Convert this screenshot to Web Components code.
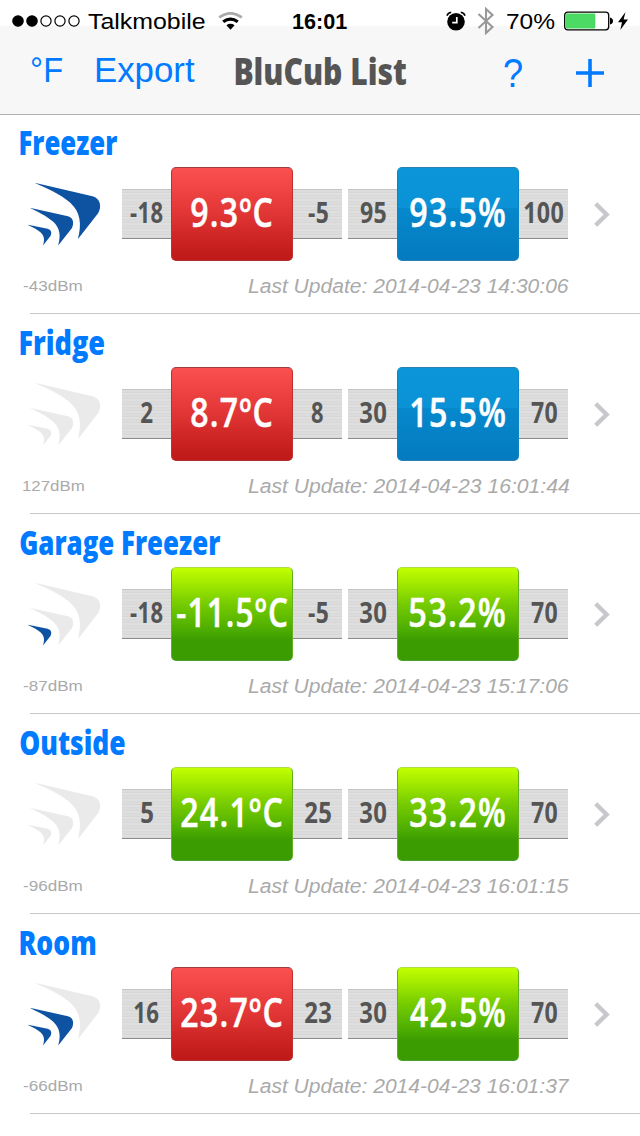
<!DOCTYPE html>
<html lang="en">
<head>
<meta charset="utf-8">
<title>BluCub List</title>
<style>
html,body{margin:0;background:#fff}
body{width:640px;height:1136px;overflow:hidden;font-family:"Liberation Sans",Arial,sans-serif}
</style>
</head>
<body>
<blucub-app></blucub-app>
<script>
const define = (name, html, init) => {
  const t = document.createElement('template');
  t.innerHTML = html;
  customElements.define(name, class extends HTMLElement {
    connectedCallback() {
      if (this.shadowRoot) return;
      this.attachShadow({mode: 'open'}).appendChild(t.content.cloneNode(true));
      if (init) init.call(this, this.shadowRoot);
    }
  });
};

/* A text label whose box is its ink width (w) by its cap height (cap). */
const ctx = document.createElement('canvas').getContext('2d');
customElements.define('fit-text', class extends HTMLElement {
  connectedCallback() {
    if (this.shadowRoot) return;
    const w = +this.getAttribute('w'), cap = +this.getAttribute('cap');
    const root = this.attachShadow({mode: 'open'});
    root.innerHTML = `<style>:host{display:block;flex:none;width:${w}px;height:${cap}px}
      span{display:inline-block;white-space:pre;line-height:${cap}px;transform-origin:0 0;vertical-align:top}</style><span><slot></slot></span>`;
    const s = getComputedStyle(this);
    ctx.font = `${s.fontStyle} ${s.fontWeight} ${s.fontSize} ${s.fontFamily}`;
    ctx.letterSpacing = s.letterSpacing === 'normal' ? '0px' : s.letterSpacing;
    const m = ctx.measureText(this.textContent);
    const k = w / (m.actualBoundingBoxRight + m.actualBoundingBoxLeft);
    const dy = cap / 2 - (m.fontBoundingBoxAscent - m.fontBoundingBoxDescent) / 2;
    root.querySelector('span').style.transform = `translate(${m.actualBoundingBoxLeft * k}px,${dy}px) scaleX(${k})`;
  }
});

define('status-bar', `<style>
:host{display:flex;height:41px;align-items:center;color:#000;font-size:22.5px}
svg{display:block;flex:none}
.dots{margin-left:12px}.carrier{margin-left:8px}.wifi{margin-left:13px}
.time{margin-left:50px;font-weight:bold;font-size:22px}
.alarm{margin-left:99px}.bt{margin-left:11px}.pct{margin-left:12px}.bat{margin-left:9px}
</style>
<svg class="dots" width="68" height="12"><g stroke="#000" stroke-width="1.2"><circle cx="6" cy="6" r="5.2"/><circle cx="20" cy="6" r="5.2"/><g fill="none"><circle cx="34" cy="6" r="5.1"/><circle cx="48" cy="6" r="5.1"/><circle cx="62" cy="6" r="5.1"/></g></g></svg>
<fit-text class="carrier" w="117" cap="16">Talkmobile</fit-text>
<svg class="wifi" width="25" height="18" viewBox="0 0 25 18"><path d="M1.2 5.4Q12.5-2.8 23.8 5.4" fill="none" stroke="#aaa" stroke-width="2.8"/><path d="M5.2 9.8Q12.5 4.4 19.8 9.8" fill="none" stroke="#000" stroke-width="3.2"/><path d="M8.4 13.2Q12.5 10.4 16.6 13.2L12.5 17.8Z"/></svg>
<fit-text class="time" w="54" cap="16">16:01</fit-text>
<svg class="alarm" width="20" height="20" viewBox="0 0 20 20"><circle cx="10" cy="10.8" r="8.8"/><path d="M.9 4.6Q2 1.6 5.2 1.2M14.8 1.2Q18 1.6 19.1 4.6" fill="none" stroke="#000" stroke-width="1.6"/><path d="M10.8 6V11.6H6.2" fill="none" stroke="#fff" stroke-width="1.7"/></svg>
<svg class="bt" width="18" height="28" viewBox="0 0 18 28"><path d="M1.5 7L15.5 20L9 26V2L15.5 8L1.5 21" fill="none" stroke="#999" stroke-width="2.1"/></svg>
<fit-text class="pct" w="48" cap="16">70%</fit-text>
<svg class="bat" width="66" height="20" viewBox="0 0 66 20"><rect x=".7" y="1.2" width="44" height="17.6" rx="3" fill="#fff" stroke="#000" stroke-width="1.3"/><rect x="2" y="2.6" width="29.3" height="14.8" rx="1" fill="#4cd964"/><path d="M46 6.5Q49 7.5 49 10T46 13.5Z"/><path d="M61.5 1L54 11.2H58L56.3 19L64 8.6H59.6Z"/></svg>`);

define('nav-bar', `<style>
:host{display:flex;align-items:flex-start;color:#007aff;font-size:34.5px;height:73px}
.f{margin:17px 0 0 31.5px}.e{margin:17px 0 0 34px}
.t{margin:17px 0 0 40px;color:#555;font:800 37px "Open Sans",sans-serif}
.q{margin:18px 0 0 98px;font-size:41px}
svg{margin:18px 0 0 54px;display:block}
</style>
<fit-text class="f" w="30" cap="24">°F</fit-text>
<fit-text class="e" w="99" cap="24">Export</fit-text>
<fit-text class="t" w="171" cap="27">BluCub List</fit-text>
<fit-text class="q" w="18.5" cap="28">?</fit-text>
<svg width="28" height="28"><path d="M0 14H28M14 0V28" stroke="#007aff" stroke-width="3.6"/></svg>`);

define('signal-logo', `<style>:host{display:block;width:74px;height:66px}svg{display:block}path{fill:#eaeaea}
:host([level="1"]) .a,:host([level="2"]) .a,:host([level="2"]) .b,:host([level="3"]) path{fill:#0e53a2}</style>
<svg width="74" height="66" viewBox="28 181 74 66">
<path class="c" d="M34.6 182.8L92.5 196.3C100.5 198.5 101.8 206.5 98.3 213L77.8 239.3C82 224 80.5 212 70 202.5C60 194 47 188.6 34.6 182.8Z"/>
<path class="b" d="M29.6 207.8L68 216.3C73.4 217.8 74.2 223 72 228L58.2 245.4C60.8 236 60.3 228.5 53 221.6C46 215.5 37.6 212 29.6 207.8Z"/>
<path class="a" d="M27.8 224.8L47.5 228.8C51.3 229.8 52 232.5 50.5 236L43 245.4C44.6 240 44.5 236.3 41 232.7C37.4 229.3 32.6 227.3 27.8 224.8Z"/></svg>`);

define('range-meter', `<style>
:host{display:flex;width:220px;height:94px;align-items:center}
.side{width:49px;height:46px;padding-bottom:2px;border-top:1px solid #c4c4c4;border-bottom:1px solid #8c8c8c;display:flex;align-items:center;justify-content:center;background:repeating-linear-gradient(#dcdcdc 0 2px,#d7d7d7 2px 3px,#dfdfdf 3px 5px,#d9d9d9 5px 6px);color:#555;font:700 28px "Open Sans",sans-serif;letter-spacing:.5px}
.val{width:121.5px;margin-right:.5px;height:94px;padding-bottom:3px;box-sizing:border-box;border-radius:5px;display:flex;align-items:center;justify-content:center;color:#fff;font:600 39.5px "Open Sans",sans-serif;letter-spacing:1.5px;-webkit-text-stroke:.5px #fff}
.red{background:linear-gradient(#fb5050,#e63a3a 42%,#c21c1a 92%,#c01a18);border:1px solid #a04444;border-color:#984040 #c03030 #a83030}
.blue{background:linear-gradient(#0b96d9,#0b92d6 43%,#0688cc 44%,#047bc0);border:1px solid #2c84b4;border-color:#2a82b0 #0a86c8 #2a80b4}
.green{background:linear-gradient(#c2ff00,#a9ee00 13%,#78cd00 38%,#4eae00 66%,#3a9c00 79%,#3a9c00);border:1px solid #76b84a;border-color:#b0e040 #62b020 #4c9c30}
</style><div class="side lo"></div><div class="val"></div><div class="side hi"></div>`, function (r) {
  const [lo, low, v, vw, hi, hiw, color] = this.getAttribute('data').split('|');
  const put = (q, t, w, cap) => r.querySelector(q).innerHTML = `<fit-text w="${w}" cap="${cap}">${t}</fit-text>`;
  put('.lo', lo, low, 20);
  put('.hi', hi, hiw, 20);
  r.querySelector('.val').classList.add(color);
  put('.val', v, vw, 28);
});

define('sensor-row', `<style>
:host{display:flex;flex-direction:column;height:200px;box-sizing:border-box;padding-top:16px;background:linear-gradient(#c8c7cc,#c8c7cc) 30px 199px/610px 1px no-repeat}
.title{margin-left:19.5px;color:#007aff;font:800 33.5px "Open Sans",sans-serif}
.main{display:flex;margin-top:12px;height:94px;padding-left:28px}
signal-logo{margin:14px 20px 0 0}
.meters{display:flex;gap:6px}
.chev{margin:34px 0 0 25px;display:block}
.foot{display:flex;justify-content:space-between;align-items:center;margin-top:18px;height:14px;padding:0 71px 0 22.5px;color:#aaa;font-size:15.2px}
.upd{font-style:italic;font-size:20px}
</style><div class="title"></div>
<div class="main"><signal-logo></signal-logo><div class="meters"></div>
<svg class="chev" width="20" height="28" viewBox="0 0 20 28"><path d="M2.7 2.7L13.6 13.5L2.7 24.3" fill="none" stroke="#c7c7cc" stroke-width="4.4"/></svg></div>
<div class="foot"><span class="dbm"></span><span class="upd"></span></div>`, function (r) {
  const a = n => this.getAttribute(n);
  r.querySelector('.title').innerHTML = `<fit-text w="${a('nw')}" cap="25">${a('name')}</fit-text>`;
  r.querySelector('.dbm').innerHTML = `<fit-text w="${a('dw')}" cap="10.6">${a('dbm')}</fit-text>`;
  r.querySelector('.upd').innerHTML = `<fit-text w="321.5" cap="14">Last Update: ${a('time')}</fit-text>`;
  r.querySelector('signal-logo').setAttribute('level', a('level'));
  r.querySelector('.meters').innerHTML = `<range-meter data="${a('t')}"></range-meter><range-meter data="${a('h')}"></range-meter>`;
});
</script>
<template id="app">
<style>
:host{display:block;width:640px;height:1136px;overflow:hidden}
header{height:114px;background:linear-gradient(#fff 26px,#f7f7f7 26px);box-shadow:0 1px 0 #b2b2b2;position:relative}
</style>
<header><status-bar></status-bar><nav-bar></nav-bar></header>
<main>
<sensor-row name="Freezer" nw="97.5" level="3" dbm="-43dBm" dw="59" time="2014-04-23 14:30:06" t="-18|33|9.3ºC|81|-5|20|red" h="95|26|93.5%|95|100|39|blue"></sensor-row>
<sensor-row name="Fridge" nw="84.5" level="0" dbm="127dBm" dw="61" time="2014-04-23 16:01:44" t="2|12|8.7ºC|81|8|12.5|red" h="30|26|15.5%|94|70|26|blue"></sensor-row>
<sensor-row name="Garage Freezer" nw="200.5" level="1" dbm="-87dBm" dw="59" time="2014-04-23 15:17:06" t="-18|33|-11.5ºC|110|-5|20|green" h="30|26|53.2%|95|70|26|green"></sensor-row>
<sensor-row name="Outside" nw="105" level="0" dbm="-96dBm" dw="59" time="2014-04-23 16:01:15" t="5|12|24.1ºC|101|25|26|green" h="30|26|33.2%|95|70|26|green"></sensor-row>
<sensor-row name="Room" nw="75.5" level="2" dbm="-66dBm" dw="59" time="2014-04-23 16:01:37" t="16|25|23.7ºC|101|23|26|red" h="30|26|42.5%|95|70|26|green"></sensor-row>
</main>
</template>
<script>
customElements.define('blucub-app', class extends HTMLElement {
  connectedCallback() {
    this.attachShadow({mode: 'open'}).appendChild(document.getElementById('app').content.cloneNode(true));
  }
});
</script>
</body>
</html>
